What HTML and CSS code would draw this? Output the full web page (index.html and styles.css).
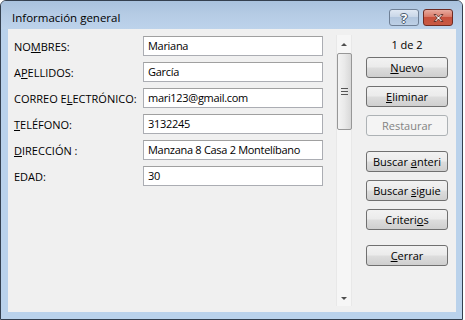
FILE: index.html
```html
<!DOCTYPE html>
<html lang="es">
<head>
  <meta charset="UTF-8" />
  <title>Información general</title>
  <link rel="stylesheet" href="styles.css">
</head>
<body>
  <div class="window">
    <div class="titlebar">
      <span class="title">Información general</span>
      <div class="caption-buttons">
        <button class="cap help" type="button">?</button>
        <button class="cap close" type="button">
          <svg width="13" height="10" viewBox="0 0 13 10">
            <path d="M2 1.5h2.2L6.5 4l2.3-2.5H11L7.7 5 11 8.5H8.8L6.5 6 4.2 8.5H2L5.3 5z" fill="#fff" stroke="#5a2a22" stroke-width="0.9" stroke-linejoin="round"></path>
          </svg>
        </button>
      </div>
    </div>

    <div class="client">
      <div class="fields">
        <label>NO<u>M</u>BRES:</label>
        <div class="input">Mariana</div>

        <label>A<u>P</u>ELLIDOS:</label>
        <div class="input">García</div>

        <label>CORREO E<u>L</u>ECTRÓNICO:</label>
        <div class="input">mari123@gmail.com</div>

        <label><u>T</u>ELÉFONO:</label>
        <div class="input">3132245</div>

        <label><u>D</u>IRECCIÓN :</label>
        <div class="input">Manzana 8 Casa 2 Montelíbano</div>

        <label>EDAD:</label>
        <div class="input">30</div>
      </div>

      <div class="scrollbar">
        <div class="arrow up"></div>
        <div class="thumb"><span class="grip"></span></div>
        <div class="track"></div>
        <div class="arrow down"></div>
      </div>

      <div class="actions">
        <div class="counter">1 de 2</div>
        <button type="button"><u>N</u>uevo</button>
        <button type="button"><u>E</u>liminar</button>
        <button type="button" disabled>Restaurar</button>
        <button type="button" class="group">Buscar <u>a</u>nteri</button>
        <button type="button">Buscar <u>s</u>iguie</button>
        <button type="button">Criteri<u>o</u>s</button>
        <button type="button" class="group"><u>C</u>errar</button>
      </div>
    </div>
  </div>
</body>
</html>
```

FILE: styles.css
```css
:root {
  --frame: #bad2eb;
  --client-bg: #f0f0f0;
  --border-dark: #34404f;
  --text: #000;
  --ui-font: 'Open Sans', 'Noto Sans', sans-serif;
}

* {
  box-sizing: border-box;
  margin: 0;
  padding: 0;
}

body {
  background: #fff;
  font-family: var(--ui-font);
  font-size: 11px;
  color: var(--text);
}

.window {
  width: 463px;
  height: 320px;
  border: 1px solid var(--border-dark);
  border-radius: 6px 6px 0 0;
  background: var(--frame);
  display: flex;
  flex-direction: column;
}

/* Barra de titulo */
.titlebar {
  height: 28px;
  display: flex;
  justify-content: space-between;
  align-items: flex-start;
  padding: 0 9px 0 11px;
  border-radius: 5px 5px 0 0;
  background: linear-gradient(180deg, #a9c2de 0%, #b6cce5 50%, #bdd3eb 100%);
}

.title {
  font-size: 11.5px;
  line-height: 16px;
  margin-top: 9px;
  color: #000;
}

.caption-buttons {
  display: flex;
  gap: 4px;
  margin-top: 8px;
}

.cap {
  height: 17px;
  border-radius: 3px;
  display: flex;
  align-items: center;
  justify-content: center;
  font-family: var(--ui-font);
}

.help {
  width: 30px;
  border: 1px solid #6f8096;
  background: linear-gradient(180deg, #dfe8f3 0%, #c9d7e8 45%, #b2c6de 50%, #bdd0e6 100%);
  color: #fff;
  font-size: 13px;
  font-weight: bold;
  text-shadow: 0 0 1px #4b5b70, 1px 0 0 #4b5b70, -1px 0 0 #4b5b70, 0 1px 0 #4b5b70, 0 -1px 0 #4b5b70;
}

.close {
  width: 30px;
  border: 1px solid #6e2b22;
  background: linear-gradient(180deg, #e8ab9f 0%, #d97a68 45%, #c7503c 50%, #c85a44 100%);
}

/* Area cliente */
.client {
  flex: 1;
  margin: 0 6px 7px 7px;
  background: var(--client-bg);
  display: flex;
  align-items: flex-start;
  padding: 7px 8px 0 6px;
}

.fields {
  display: grid;
  grid-template-columns: 129px 180px;
  grid-auto-rows: 20px;
  row-gap: 6px;
  align-items: center;
}

.fields label {
  white-space: nowrap;
}

.input {
  height: 20px;
  line-height: 18px;
  border: 1px solid #abadb3;
  border-top-color: #a0a0a0;
  background: #fff;
  padding-left: 4px;
  letter-spacing: -0.3px;
  white-space: nowrap;
  overflow: hidden;
}

/* Barra de desplazamiento */
.scrollbar {
  width: 16px;
  height: 271px;
  margin: -1px 0 0 13px;
  background: #f6f6f6;
  border-left: 1px solid #e8e8e8;
  border-right: 1px solid #e8e8e8;
  display: flex;
  flex-direction: column;
  align-items: center;
}

.arrow {
  width: 0;
  height: 0;
  border-left: 3px solid transparent;
  border-right: 3px solid transparent;
}

.arrow.up {
  margin: 8px 0 7px;
  border-bottom: 3px solid #4e4e4e;
}

.arrow.down {
  margin: 0 0 6px;
  border-top: 3px solid #4e4e4e;
}

.thumb {
  width: 15px;
  height: 77px;
  border: 1px solid #979797;
  border-radius: 2px;
  background: linear-gradient(90deg, #f3f3f3 0%, #e9e9e9 50%, #d8d8d8 100%);
  display: flex;
  align-items: center;
  justify-content: center;
}

.grip {
  width: 7px;
  height: 7px;
  border-top: 1px solid #555;
  border-bottom: 1px solid #555;
  position: relative;
}

.grip::after {
  content: '';
  position: absolute;
  left: 0;
  right: 0;
  top: 2px;
  border-top: 1px solid #555;
}

.track {
  flex: 1;
}

/* Botones */
.actions {
  width: 82px;
  margin-left: 14px;
  display: flex;
  flex-direction: column;
}

.counter {
  height: 17px;
  line-height: 17px;
  text-align: center;
  margin-bottom: 4px;
}

.actions button {
  height: 21px;
  margin-bottom: 8px;
  border: 1px solid #707070;
  border-radius: 3px;
  background: linear-gradient(180deg, #f2f2f2 0%, #ebebeb 48%, #dddddd 52%, #cfcfcf 100%);
  font-family: var(--ui-font);
  font-size: 11px;
  color: #000;
  white-space: nowrap;
  overflow: hidden;
}

.actions button.group {
  margin-top: 7px;
}

.actions button:disabled {
  border-color: #adb2b5;
  background: #f4f4f4;
  color: #838383;
}
```
